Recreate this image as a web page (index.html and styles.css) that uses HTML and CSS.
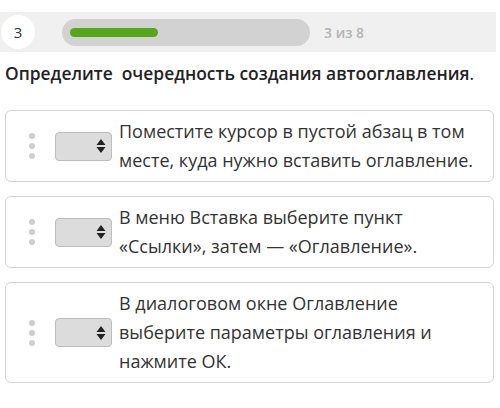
FILE: index.html
```html
<!DOCTYPE html>
<html>
    <head>
        <meta charset="utf-8">
        <title>Порядок</title>
        <link rel="stylesheet" href="styles.css">
    </head>
    <body>
        <div class="topbar">
            <div class="step">3</div>
            <div class="track"><div class="fill"></div></div>
            <div class="count">3 из 8</div>
        </div>
        <h1 class="question">Определите&nbsp; очередность создания автооглавления<span class="dot">.</span></h1>
        <div class="items">
            <div class="card">
                <div class="grip"><i></i><i></i><i></i></div>
                <div class="picker">
                    <svg width="10" height="16" viewBox="0 0 10 16"><path d="M5 1 L9.5 7 H0.5 Z M5 15 L9.5 9 H0.5 Z" fill="#222"/></svg>
                </div>
                <p class="text">Поместите курсор в пустой абзац в том месте, куда нужно вставить оглавление.</p>
            </div>
            <div class="card">
                <div class="grip"><i></i><i></i><i></i></div>
                <div class="picker">
                    <svg width="10" height="16" viewBox="0 0 10 16"><path d="M5 1 L9.5 7 H0.5 Z M5 15 L9.5 9 H0.5 Z" fill="#222"/></svg>
                </div>
                <p class="text">В меню Вставка выберите пункт «Ссылки», затем — «Оглавление».</p>
            </div>
            <div class="card">
                <div class="grip"><i></i><i></i><i></i></div>
                <div class="picker">
                    <svg width="10" height="16" viewBox="0 0 10 16"><path d="M5 1 L9.5 7 H0.5 Z M5 15 L9.5 9 H0.5 Z" fill="#222"/></svg>
                </div>
                <p class="text">В диалоговом окне Оглавление выберите параметры оглавления и нажмите ОК.</p>
            </div>
        </div>
    </body>
</html>
```

FILE: styles.css
```css
body {
    margin: 0;
    background: #fff;
    font-family: "Open Sans", "Noto Sans", sans-serif;
    color: #333;
}
.topbar {
    margin-top: 12px;
    width: 496px;
    height: 40px;
    background: #f0f0f0;
    display: flex;
    align-items: center;
    padding-left: 1px;
    box-sizing: border-box;
}
.step {
    width: 34px;
    height: 34px;
    border-radius: 50%;
    background: #fff;
    display: flex;
    align-items: center;
    justify-content: center;
    font-size: 15px;
    color: #333;
}
.track {
    margin-left: 27px;
    width: 248px;
    height: 27px;
    border-radius: 14px;
    background: #d2d2d2;
    display: flex;
    align-items: center;
    padding-left: 8px;
    box-sizing: border-box;
}
.fill {
    width: 88px;
    height: 9px;
    border-radius: 5px;
    background: #54a81a;
}
.count {
    margin-left: 14px;
    font-size: 14px;
    font-weight: 600;
    color: #b4b4b4;
}
.question {
    margin: 9px 0 0 5px;
    font-size: 17.4px;
    line-height: 24px;
    font-weight: 600;
    color: #222;
}
.question .dot {
    font-weight: 400;
}
.items {
    margin: 25px 0 0 5px;
    width: 489px;
    display: flex;
    flex-direction: column;
    gap: 14px;
}
.card {
    display: flex;
    align-items: center;
    border: 1px solid #d4d4d4;
    border-radius: 6px;
    padding: 6px 8px 6px 23px;
}
.grip {
    display: flex;
    flex-direction: column;
    gap: 4px;
}
.grip i {
    width: 6px;
    height: 6px;
    border-radius: 50%;
    background: #cfcfcf;
}
.picker {
    margin-left: 20px;
    width: 57px;
    height: 29px;
    box-sizing: border-box;
    background: #dcdcdc;
    border: 1px solid #bdbdbd;
    border-radius: 4px;
    display: flex;
    align-items: center;
    justify-content: flex-end;
    padding-right: 5px;
    flex-shrink: 0;
}
.text {
    margin: 0 0 0 7px;
    font-size: 18px;
    line-height: 29px;
    color: #333;
}
```
